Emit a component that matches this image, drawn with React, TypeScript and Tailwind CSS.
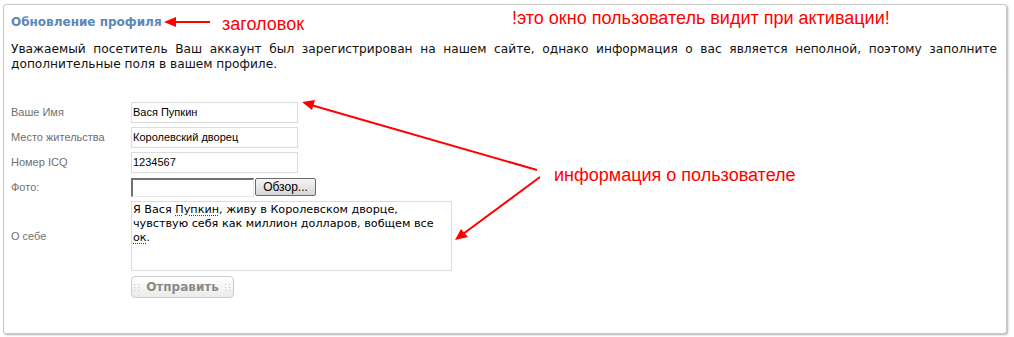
import React from "react";

function Grip() {
  return (
    <svg width="6" height="7" viewBox="0 0 6 7" className="shrink-0">
      {[0, 3, 6].map((y) =>
        [0, 4].map((x) => <rect key={`${x}-${y}`} x={x} y={y} width="1.2" height="1" fill="#c4c4c4" />)
      )}
    </svg>
  );
}

export default function App() {
  const sans = { fontFamily: '"DejaVu Sans", Verdana, sans-serif' };
  return (
    <div className="relative w-[1014px] h-[337px] bg-white overflow-hidden">
      <div
        className="ml-[3px] mt-[4px] w-[1004px] h-[330px] border border-[#c9c9c9] rounded-[3px] shadow-[1px_1px_2px_rgba(0,0,0,0.3)] bg-white pl-[7px] pr-[9px] pt-[10px]"
        style={sans}
      >
        <h1 className="text-[12px] leading-[15px] font-bold text-[#5a88b7]">Обновление профиля</h1>
        <p className="mt-[12px] text-[12.2px] leading-[15px] text-[#111] text-justify">
          Уважаемый посетитель Ваш аккаунт был зарегистрирован на нашем сайте, однако информация о вас является неполной, поэтому заполните дополнительные поля в вашем профиле.
        </p>
        <div
          className="mt-[30px] grid grid-cols-[120px_auto] gap-y-[4px] items-center text-[11px]"
          style={{ fontFamily: '"Liberation Sans", Arial, sans-serif' }}
        >
          <label className="text-[#707070]">Ваше Имя</label>
          <div className="w-[167px] h-[21px] border border-[#dcdcdc] flex items-center px-[1px] text-[11px] text-black">Вася Пупкин</div>
          <label className="text-[#707070]">Место жительства</label>
          <div className="w-[167px] h-[21px] border border-[#dcdcdc] flex items-center px-[1px] text-[11px] text-black">Королевский дворец</div>
          <label className="text-[#707070]">Номер ICQ</label>
          <div className="w-[167px] h-[21px] border border-[#dcdcdc] flex items-center px-[1px] text-[11px] text-black">1234567</div>
          <label className="text-[#707070]">Фото:</label>
          <div className="flex items-center h-[20px]">
            <div className="w-[123px] h-[19px] border border-t-[#6f6f6f] border-l-[#6f6f6f] border-r-[#e6e6e6] border-b-[#e6e6e6] border-t-2 border-l-2 bg-white" />
            <div className="ml-[1px] w-[61px] h-[18px] border border-[#6a6a6a] rounded-[2px] bg-gradient-to-b from-[#f6f6f6] to-[#d6d6d6] flex items-center justify-center text-[12px] text-black">
              Обзор...
            </div>
          </div>
          <label className="text-[#707070]">О себе</label>
          <div
            className="w-[321px] h-[70px] border border-[#dcdcdc] px-[1px] pt-[1px] text-[11.2px] leading-[14px] text-black"
            style={sans}
          >
            Я Вася{" "}
            <span className="underline decoration-dotted decoration-[#e00000] underline-offset-[2px]">Пупкин</span>, живу в Королевском дворце,
            <br />
            чувствую себя как миллион долларов, вобщем все
            <br />
            <span className="underline decoration-dotted decoration-[#e00000] underline-offset-[2px]">ок</span>.
          </div>
          <div />
          <div className="mt-[1px] w-[103px] h-[22px] border border-[#cccccc] rounded-[4px] bg-gradient-to-b from-white to-[#ebebeb] flex items-center justify-center gap-[6px] text-[12px] font-bold text-[#8a8a8a]" style={sans}>
            <Grip />
            <span>Отправить</span>
            <Grip />
          </div>
        </div>
      </div>

      {/* annotations */}
      <div
        className="absolute left-[222px] top-[15px] text-[18px] leading-[18px] text-[#ff0000]"
        style={{ fontFamily: '"Liberation Sans", Arial, sans-serif' }}
      >
        заголовок
      </div>
      <div
        className="absolute left-[512px] top-[9px] text-[18px] leading-[18px] text-[#ff0000]"
        style={{ fontFamily: '"Liberation Sans", Arial, sans-serif' }}
      >
        !это окно пользователь видит при активации!
      </div>
      <div
        className="absolute left-[554px] top-[166px] text-[18px] leading-[18px] text-[#ff0000]"
        style={{ fontFamily: '"Liberation Sans", Arial, sans-serif' }}
      >
        информация о пользователе
      </div>
      <svg className="absolute inset-0 pointer-events-none" width="1014" height="337">
        <line x1="174" y1="22" x2="210" y2="22" stroke="#ff0000" strokeWidth="2" />
        <polygon points="164,22 176,17 176,27" fill="#ff0000" />
        <line x1="537" y1="170" x2="311" y2="105" stroke="#ff0000" strokeWidth="2" />
        <polygon points="302,102 315,100 312,110" fill="#ff0000" />
        <line x1="540" y1="177" x2="463" y2="234" stroke="#ff0000" strokeWidth="2" />
        <polygon points="455,240 461,229 468,237" fill="#ff0000" />
      </svg>
    </div>
  );
}
